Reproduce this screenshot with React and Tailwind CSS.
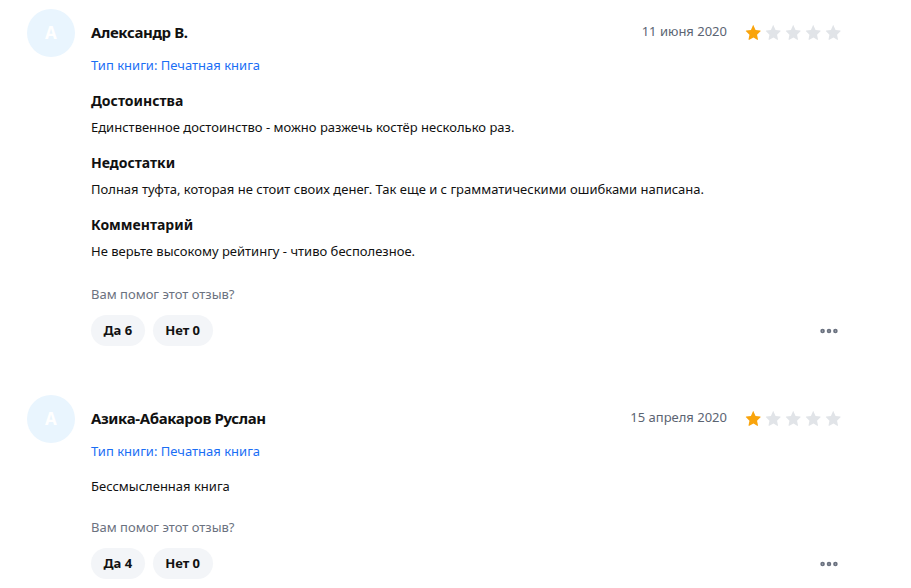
import { MoreHorizontal } from 'lucide-react';

const REVIEWS = [
    {
        name: 'Александр В.',
        date: '11 июня 2020',
        rating: 1,
        sections: [
            { title: 'Достоинства', text: 'Единственное достоинство - можно разжечь костёр несколько раз.' },
            { title: 'Недостатки', text: 'Полная туфта, которая не стоит своих денег. Так еще и с грамматическими ошибками написана.' },
            { title: 'Комментарий', text: 'Не верьте высокому рейтингу - чтиво бесполезное.' },
        ],
        yes: 6,
        no: 0,
    },
    {
        name: 'Азика-Абакаров Руслан',
        date: '15 апреля 2020',
        rating: 1,
        text: 'Бессмысленная книга',
        yes: 4,
        no: 0,
    },
];

const Star = ({ filled }) => (
    <svg width="17" height="17" viewBox="0 0 24 24">
        <path
            d="M12 2.2l2.9 6.1 6.6.8c.6.1.9.9.4 1.3l-4.9 4.6 1.3 6.6c.1.6-.5 1.1-1.1.8L12 19.1l-5.9 3.3c-.5.3-1.2-.2-1.1-.8l1.3-6.6-4.9-4.6c-.5-.4-.2-1.2.4-1.3l6.6-.8L11.1 2.2c.3-.6 1.3-.6 1.6 0z"
            fill={filled ? '#f9a40c' : '#e1e4e8'}
        />
    </svg>
);

const Review = ({ review }) => (
    <div className="flex gap-4">
        <div className="w-12 h-12 shrink-0 rounded-full bg-[#e9f5fe] flex items-center justify-center text-white text-[17px] font-bold">
            A
        </div>
        <div className="flex-1 pt-[13px]">
            <div className="flex items-center justify-between h-[20px]">
                <h3 className="text-[15px] font-bold text-[#111] tracking-tight">{review.name}</h3>
                <div className="flex items-center gap-[18px]">
                    <span className="text-[13px] text-[#5b6472]">{review.date}</span>
                    <div className="flex gap-[3px]">
                        {[1, 2, 3, 4, 5].map((i) => (
                            <Star key={i} filled={i <= review.rating} />
                        ))}
                    </div>
                </div>
            </div>
            <p className="mt-[13px] leading-[20px] text-[13px] text-[#1a6ef5]">Тип книги: Печатная книга</p>

            {review.sections ? (
                <div className="mt-[16px] space-y-[16px]">
                    {review.sections.map((s) => (
                        <div key={s.title}>
                            <h4 className="text-[14px] leading-[20px] font-bold text-[#111]">{s.title}</h4>
                            <p className="mt-[6px] leading-[20px] text-[13px] text-[#111]">{s.text}</p>
                        </div>
                    ))}
                </div>
            ) : (
                <p className="mt-[15px] leading-[20px] text-[13px] text-[#111]">{review.text}</p>
            )}

            <p className={`${review.sections ? 'mt-[23px]' : 'mt-[21px]'} leading-[20px] text-[13px] text-[#6b7280]`}>
                Вам помог этот отзыв?
            </p>
            <div className="mt-[11px] flex items-center justify-between">
                <div className="flex gap-2">
                    <button className="h-[31px] px-[12.5px] rounded-full bg-[#f3f5f8] text-[13px] font-bold text-[#111]">
                        Да {review.yes}
                    </button>
                    <button className="h-[31px] px-[12.5px] rounded-full bg-[#f3f5f8] text-[13px] font-bold text-[#111]">
                        Нет {review.no}
                    </button>
                </div>
                <MoreHorizontal size={22} strokeWidth={3} className="text-[#6b7280] mr-[2px]" />
            </div>
        </div>
    </div>
);

export default function App() {
    return (
        <div className="w-[911px] h-[588px] bg-white overflow-hidden font-['Noto_Sans',sans-serif]">
            <div className="pl-[27px] pr-[69px] pt-[9px] space-y-[49px]">
                {REVIEWS.map((r) => (
                    <Review key={r.name} review={r} />
                ))}
            </div>
        </div>
    );
}
